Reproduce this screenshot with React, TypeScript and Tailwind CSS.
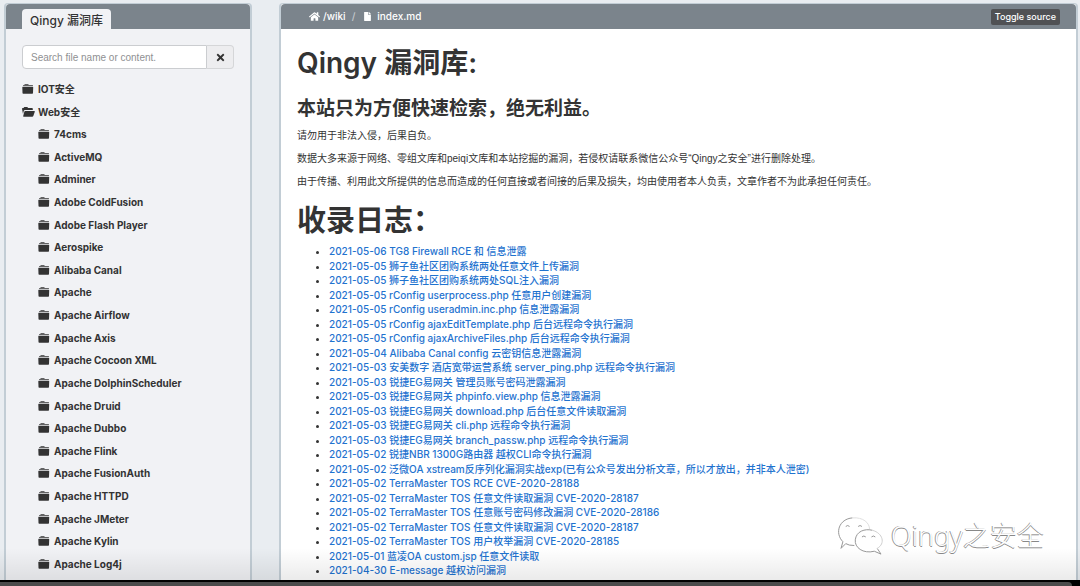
import { FaFile, FaHome, FaTimes } from "react-icons/fa";

const categories = [
  "74cms", "ActiveMQ", "Adminer", "Adobe ColdFusion", "Adobe Flash Player", "Aerospike",
  "Alibaba Canal", "Apache", "Apache Airflow", "Apache Axis", "Apache Cocoon XML",
  "Apache DolphinScheduler", "Apache Druid", "Apache Dubbo", "Apache Flink",
  "Apache FusionAuth", "Apache HTTPD", "Apache JMeter", "Apache Kylin", "Apache Log4j",
];

const entries = [
  "2021-05-06 TG8 Firewall RCE 和 信息泄露",
  "2021-05-05 狮子鱼社区团购系统两处任意文件上传漏洞",
  "2021-05-05 狮子鱼社区团购系统两处SQL注入漏洞",
  "2021-05-05 rConfig userprocess.php 任意用户创建漏洞",
  "2021-05-05 rConfig useradmin.inc.php 信息泄露漏洞",
  "2021-05-05 rConfig ajaxEditTemplate.php 后台远程命令执行漏洞",
  "2021-05-05 rConfig ajaxArchiveFiles.php 后台远程命令执行漏洞",
  "2021-05-04 Alibaba Canal config 云密钥信息泄露漏洞",
  "2021-05-03 安美数字 酒店宽带运营系统 server_ping.php 远程命令执行漏洞",
  "2021-05-03 锐捷EG易网关 管理员账号密码泄露漏洞",
  "2021-05-03 锐捷EG易网关 phpinfo.view.php 信息泄露漏洞",
  "2021-05-03 锐捷EG易网关 download.php 后台任意文件读取漏洞",
  "2021-05-03 锐捷EG易网关 cli.php 远程命令执行漏洞",
  "2021-05-03 锐捷EG易网关 branch_passw.php 远程命令执行漏洞",
  "2021-05-02 锐捷NBR 1300G路由器 越权CLI命令执行漏洞",
  "2021-05-02 泛微OA xstream反序列化漏洞实战exp(已有公众号发出分析文章，所以才放出，并非本人泄密)",
  "2021-05-02 TerraMaster TOS RCE CVE-2020-28188",
  "2021-05-02 TerraMaster TOS 任意文件读取漏洞 CVE-2020-28187",
  "2021-05-02 TerraMaster TOS 任意账号密码修改漏洞 CVE-2020-28186",
  "2021-05-02 TerraMaster TOS 任意文件读取漏洞 CVE-2020-28187",
  "2021-05-02 TerraMaster TOS 用户枚举漏洞 CVE-2020-28185",
  "2021-05-01 蓝凌OA custom.jsp 任意文件读取",
  "2021-04-30 E-message 越权访问漏洞",
];

function ClosedFolder() {
  return (
    <svg viewBox="0 0 12 12" className="h-3 w-3 shrink-0" fill="currentColor" aria-hidden="true">
      <path d="M1 3V2.5Q1 2 1.5 2H2L3 1H6L7 2H10.500Q11 2 11 2.500V3Z" opacity=".75" />
      <path d="M.3 4.200Q.3 3.700.8 3.700H10.700Q11.200 3.700 11.200 4.200L11 10Q11 10.700 10.300 10.700H1.200Q.5 10.700.5 10Z" />
    </svg>
  );
}

function OpenFolder() {
  return (
    <svg viewBox="0 0 13 12" className="h-3 w-[13px] shrink-0" fill="currentColor" aria-hidden="true">
      <path d="M0 2.800Q0 2 .8 2H1.500L2.300 1H5.200L6.200 2H10Q10.800 2 10.800 2.800V4H3Q2 4 1.700 5L1 8Z" />
      <path d="M3.200 5H12.300Q13 5 12.800 5.700L11.300 10Q11 10.700 10.300 10.700H1.600Q1 10.700 1.200 10L2.400 5.600Q2.600 5 3.200 5Z" />
    </svg>
  );
}

function Sidebar() {
  return (
    <aside className="flex w-[248px] shrink-0 flex-col rounded-t border-x-2 border-t border-[#c2cdd5] bg-[#f1f2f5]">
      <header className="flex h-[25px] shrink-0 items-end rounded-t bg-[#7b848c] pl-4">
        <h2 className="flex h-5 items-center rounded-t bg-[#f1f2f5] px-2 pt-1 font-['Inter','Noto_Sans_CJK_SC',sans-serif] text-xs font-medium">
          Qingy 漏洞库
        </h2>
      </header>
      <form className="mx-4 mt-4 flex h-6 shrink-0">
        <input
          aria-label="Search"
          placeholder="Search file name or content."
          className="min-w-0 flex-1 rounded-l-sm border border-[#cbcdd0] bg-white px-2 text-[10px] outline-none placeholder:text-[#8f9092]"
        />
        <button type="button" aria-label="Clear search" className="flex w-[27px] items-center justify-center rounded-r-sm border border-l-0 border-[#d5d6d8] bg-[#ededef]">
          <FaTimes className="size-[11px]" />
        </button>
      </form>
      <ul className="flex min-h-0 flex-1 flex-col justify-between px-4 pt-3 pb-2 font-['Inter','Noto_Sans_CJK_SC',sans-serif] text-[10px] leading-4 font-bold">
        <li><a href="#iot" className="flex items-center gap-1"><ClosedFolder />IOT安全</a></li>
        <li><a href="#web" className="flex items-center gap-[3px]"><OpenFolder />Web安全</a></li>
        {categories.map((name) => (
          <li key={name} className="pl-4">
            <a href="#category" className="flex items-center gap-1"><ClosedFolder />{name}</a>
          </li>
        ))}
      </ul>
    </aside>
  );
}

function Article() {
  return (
    <main className="flex min-w-0 flex-1 flex-col rounded-t border-x-2 border-t border-[#c2cdd5] bg-white">
      <header className="flex h-[25px] shrink-0 items-center justify-between rounded-t bg-[#7b848c] pr-4 pl-7 font-['Inter',sans-serif] text-[10px] font-medium text-white">
        <nav aria-label="Breadcrumb" className="flex items-center gap-[3px]">
          <FaHome className="size-[11px]" />
          <a href="#wiki">/wiki</a>
          <span className="px-[3px] text-[#c4c9cd]">/</span>
          <FaFile className="mx-[2px] size-[9px]" />
          <a href="#index">index.md</a>
        </nav>
        <button type="button" className="h-4 rounded-xs bg-[#505154] px-1 text-[9px]">Toggle source</button>
      </header>
      <article className="flex min-h-0 flex-1 flex-col pt-4 pl-4">
        <h1 className="font-['Inter','Noto_Sans_CJK_SC',sans-serif] text-[28px] leading-9 font-semibold">Qingy 漏洞库:</h1>
        <h2 className="mt-[14px] text-[19px] leading-7 font-bold">本站只为方便快速检索，绝无利益。</h2>
        <div className="mt-[5px] flex flex-col gap-2 text-[10px] leading-[15px]">
          <p>请勿用于非法入侵，后果自负。</p>
          <p>数据大多来源于网络、零组文库和peiqi文库和本站挖掘的漏洞，若侵权请联系微信公众号“Qingy之安全”进行删除处理。</p>
          <p>由于传播、利用此文所提供的信息而造成的任何直接或者间接的后果及损失，均由使用者本人负责，文章作者不为此承担任何责任。</p>
        </div>
        <h1 className="mt-[14px] text-[29px] leading-9 font-bold">收录日志：</h1>
        <ul className="mt-[5px] flex min-h-0 flex-1 list-disc flex-col justify-between pb-[3px] pl-8 font-['Inter','Noto_Sans_CJK_SC',sans-serif] text-[10px] leading-[14px] font-medium">
          {entries.map((entry, index) => (
            <li key={index}><a href="#entry" className="text-[#1f73cf]">{entry}</a></li>
          ))}
        </ul>
      </article>
    </main>
  );
}

function Watermark() {
  return (
    <div className="pointer-events-none absolute right-9 bottom-[30px] flex items-center gap-1.5">
      <svg viewBox="0 0 50 42" className="h-10 w-12" fill="white" stroke="#929292" strokeWidth="1">
        <path d="M18 31 Q12 31 9 29 L4 34 L6 27 C-3 18 2 3 16 2" />
        <path d="M16 2C27 1 34 7 34 14" stroke="#ddd" />
        <path d="M42 34 L46 40 L39 37 C27 40 18 33 19 25 C20 16 29 13 37 15" />
        <path d="M37 15C48 18 51 29 42 34" stroke="#ccc" />
        <path d="M9 11q2-2 4 0M22 11q2-2 4 0M26 22q2-2 4 0M36 22q2-2 4 0" fill="none" />
      </svg>
      <span className="font-['Noto_Sans','Noto_Sans_CJK_SC',sans-serif] text-[27px] leading-8 font-light text-white [text-shadow:-1px_0_#999,0_1px_#888]">Qingy之安全</span>
    </div>
  );
}

export default function App() {
  return (
    <div className="relative flex h-screen flex-col overflow-hidden bg-[#e9edf1] font-['Liberation_Sans','Noto_Sans_CJK_SC',sans-serif] text-[#333]">
      <div className="flex min-h-0 flex-1 gap-[27px] pt-[3px] pr-[2px] pl-1">
        <Sidebar />
        <Article />
      </div>
      <div className="pointer-events-none absolute inset-x-0 bottom-1.5 h-8 bg-linear-to-b from-transparent to-black/8" />
      <div className="h-1.5 shrink-0 bg-black pt-[2px]">
        <footer className="mr-2 h-1 rounded-tr bg-[#4b4b4b]" />
      </div>
      <Watermark />
    </div>
  );
}
